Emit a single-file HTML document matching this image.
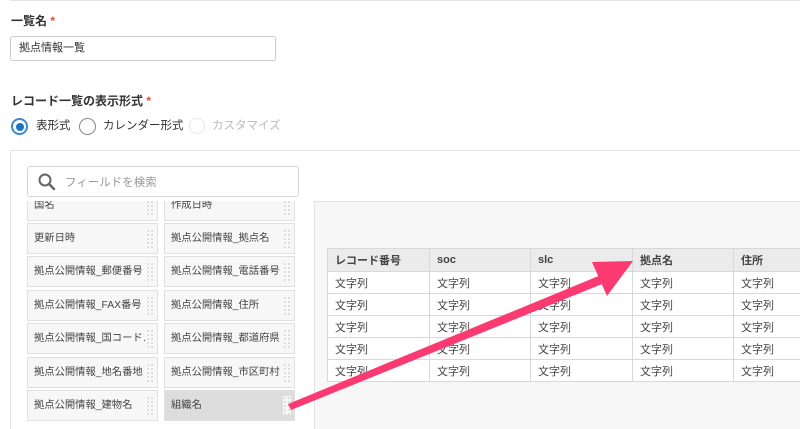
<!DOCTYPE html>
<html><head><meta charset="utf-8"><style>
*{margin:0;padding:0;box-sizing:border-box}
html,body{width:800px;height:429px;overflow:hidden}
body{background:#fff;font-family:"Liberation Sans","Noto Sans CJK JP",sans-serif;color:#333;position:relative}
.abs{position:absolute}
.lbl{font-size:12px;font-weight:bold;color:#333}
.lbl span{color:#e74c3c}
.inp{border:1px solid #ccc;border-radius:3px;background:#fff}
.f{position:absolute;width:131px;height:31px;background:#f7f7f7;border:1px solid #e0e0e0;font-size:10.3px;line-height:29px;padding-left:6px;color:#444;white-space:nowrap;overflow:hidden}
.f::after{content:"";position:absolute;right:3px;top:5px;width:8px;height:19px;background:#f7f7f7;background-image:radial-gradient(#ddd 1px,transparent 1.2px);background-size:4px 4px}
table{border-collapse:collapse;table-layout:fixed;width:510px;font-size:11px;color:#444;position:absolute;left:327px;top:248px}
td,th{border:1px solid #d8d8d8;height:22px;padding-left:7px;text-align:left;background:#fff;font-weight:normal;white-space:nowrap;overflow:hidden}
th{background:#ebebeb;font-weight:bold;height:23px}
</style></head><body>
<div class="abs" style="left:10px;top:0;width:790px;height:1px;background:#e6e6e6"></div>
<div class="abs lbl" style="left:11px;top:12px">一覧名 <span>*</span></div>
<div class="abs inp" style="left:10px;top:36px;width:266px;height:25px;font-size:11px;line-height:23px;padding-left:8px">拠点情報一覧</div>
<div class="abs lbl" style="left:11px;top:92px">レコード一覧の表示形式 <span>*</span></div>
<div class="abs" style="left:11px;top:118px;width:17px;height:17px;border-radius:50%;border:2px solid #3b8bd0;background:#fff"><div style="margin:2.5px;width:8px;height:8px;border-radius:50%;background:#1f72c4"></div></div>
<div class="abs" style="left:36px;top:118px;font-size:11.5px;line-height:17px">表形式</div>
<div class="abs" style="left:79px;top:118px;width:17px;height:17px;border-radius:50%;border:1px solid #888"></div>
<div class="abs" style="left:103px;top:118px;font-size:11.5px;line-height:17px">カレンダー形式</div>
<div class="abs" style="left:189px;top:118px;width:16px;height:16px;border-radius:50%;border:1px solid #e6e6e6"></div>
<div class="abs" style="left:212px;top:118px;font-size:11.5px;line-height:17px;color:#bbb">カスタマイズ</div>
<div class="abs" style="left:10px;top:150px;width:800px;height:300px;border:1px solid #e3e3e3;background:#fff"></div>
<div class="abs inp" style="left:27px;top:166px;width:272px;height:31px;border-color:#d5d5d5"></div>
<svg class="abs" style="left:37px;top:172px" width="20" height="20" viewBox="0 0 20 20"><circle cx="8" cy="8" r="5.5" fill="none" stroke="#666" stroke-width="2"/><path d="M12 12l5 5" stroke="#666" stroke-width="2.5" stroke-linecap="round"/></svg>
<div class="abs" style="left:65px;top:174px;font-size:11.5px;color:#999">フィールドを検索</div>
<div class="abs" style="left:27px;top:201px;width:270px;height:220px;overflow:hidden">
<div class="f" style="left:0;top:-11px">国名</div><div class="f" style="left:137px;top:-11px">作成日時</div>
<div class="f" style="left:0;top:22px">更新日時</div><div class="f" style="left:137px;top:22px">拠点公開情報_拠点名</div>
<div class="f" style="left:0;top:55px">拠点公開情報_郵便番号</div><div class="f" style="left:137px;top:55px">拠点公開情報_電話番号</div>
<div class="f" style="left:0;top:89px">拠点公開情報_FAX番号</div><div class="f" style="left:137px;top:89px">拠点公開情報_住所</div>
<div class="f" style="left:0;top:122px">拠点公開情報_国コード…</div><div class="f" style="left:137px;top:122px">拠点公開情報_都道府県</div>
<div class="f" style="left:0;top:156px">拠点公開情報_地名番地</div><div class="f" style="left:137px;top:156px">拠点公開情報_市区町村</div>
<div class="f" style="left:0;top:189px">拠点公開情報_建物名</div><div class="f" style="left:137px;top:189px;background:#ddd">組織名</div>
</div>
<div class="abs" style="left:314px;top:201px;width:490px;height:240px;background:#f7f7f7;border:1px solid #e3e3e3"></div>
<table>
<colgroup><col style="width:102px"><col style="width:101px"><col style="width:102px"><col style="width:101px"><col style="width:104px"></colgroup>
<tr><th>レコード番号</th><th>soc</th><th>slc</th><th>拠点名</th><th>住所</th></tr>
<tr><td>文字列</td><td>文字列</td><td>文字列</td><td>文字列</td><td>文字列</td></tr>
<tr><td>文字列</td><td>文字列</td><td>文字列</td><td>文字列</td><td>文字列</td></tr>
<tr><td>文字列</td><td>文字列</td><td>文字列</td><td>文字列</td><td>文字列</td></tr>
<tr><td>文字列</td><td>文字列</td><td>文字列</td><td>文字列</td><td>文字列</td></tr>
<tr><td>文字列</td><td>文字列</td><td>文字列</td><td>文字列</td><td>文字列</td></tr>
</table>
<svg class="abs" style="left:0;top:0" width="800" height="429"><path d="M288 404 L601 275 L607 282 L291 410 Z M592 262 L633 261 L607 296 Z" fill="#fb3a72"/></svg>
</body></html>
